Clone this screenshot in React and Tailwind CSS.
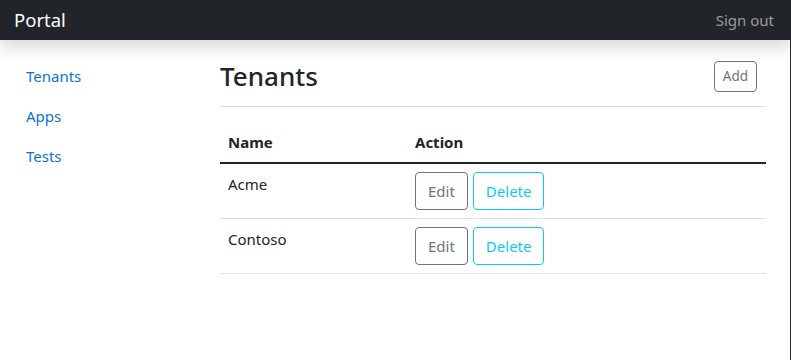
const tenants = ['Acme', 'Contoso'];

const App = () => {
    return (
        <div className="min-h-screen bg-white text-[#212529] font-['Noto_Sans',sans-serif] text-[15px]">
            {/* Top bar */}
            <nav className="relative z-10 h-10 bg-[#212529] flex items-center justify-between pl-[14px] pr-[17px] shadow-[0_8px_16px_rgba(0,0,0,0.15)]">
                <span className="text-[18.5px] leading-[30px] text-white">Portal</span>
                <a href="#" className="text-[15px] leading-6 text-[rgba(255,255,255,0.55)]">Sign out</a>
            </nav>

            <div className="flex min-h-[320px] border-r border-[#2b2b2b]">
                {/* Sidebar */}
                <aside className="w-[196px] shrink-0 pt-4 pl-[10px]">
                    <ul className="flex flex-col">
                        {['Tenants', 'Apps', 'Tests'].map((item) => (
                            <li key={item}>
                                <a href="#" className="block px-4 py-2 leading-6 text-[#0a76d1]">{item}</a>
                            </li>
                        ))}
                    </ul>
                </aside>

                {/* Main */}
                <main className="flex-1 pl-6 pr-6">
                    <div className="flex items-center justify-between pt-[19px] pb-[13px] mb-[15px] border-b border-[#dee2e6]">
                        <h2 className="text-[26px] leading-[34px] font-medium">Tenants</h2>
                        <button className="h-[31px] px-2 mr-[9px] text-[13.5px] leading-[21px] text-[#6c757d] border border-[#6c757d] rounded-[4px]">Add</button>
                    </div>

                    <table className="w-full text-left border-collapse">
                        <thead>
                            <tr className="border-b-2 border-[#212529]">
                                <th className="w-[187px] px-2 py-2 leading-6 font-bold">Name</th>
                                <th className="px-2 py-2 leading-6 font-bold">Action</th>
                            </tr>
                        </thead>
                        <tbody>
                            {tenants.map((t) => (
                                <tr key={t} className="border-b border-[#dee2e6]">
                                    <td className="px-2 py-2 leading-6 align-top">{t}</td>
                                    <td className="px-2 py-2 align-top">
                                        <div className="flex gap-[5px]">
                                            <button className="h-[38px] px-3 leading-6 text-[#6c757d] border border-[#6c757d] rounded-[4px]">Edit</button>
                                            <button className="h-[38px] px-3 leading-6 text-[#0dcaf0] border border-[#0dcaf0] rounded-[4px]">Delete</button>
                                        </div>
                                    </td>
                                </tr>
                            ))}
                        </tbody>
                    </table>
                </main>
            </div>
        </div>
    );
};

export default App;
